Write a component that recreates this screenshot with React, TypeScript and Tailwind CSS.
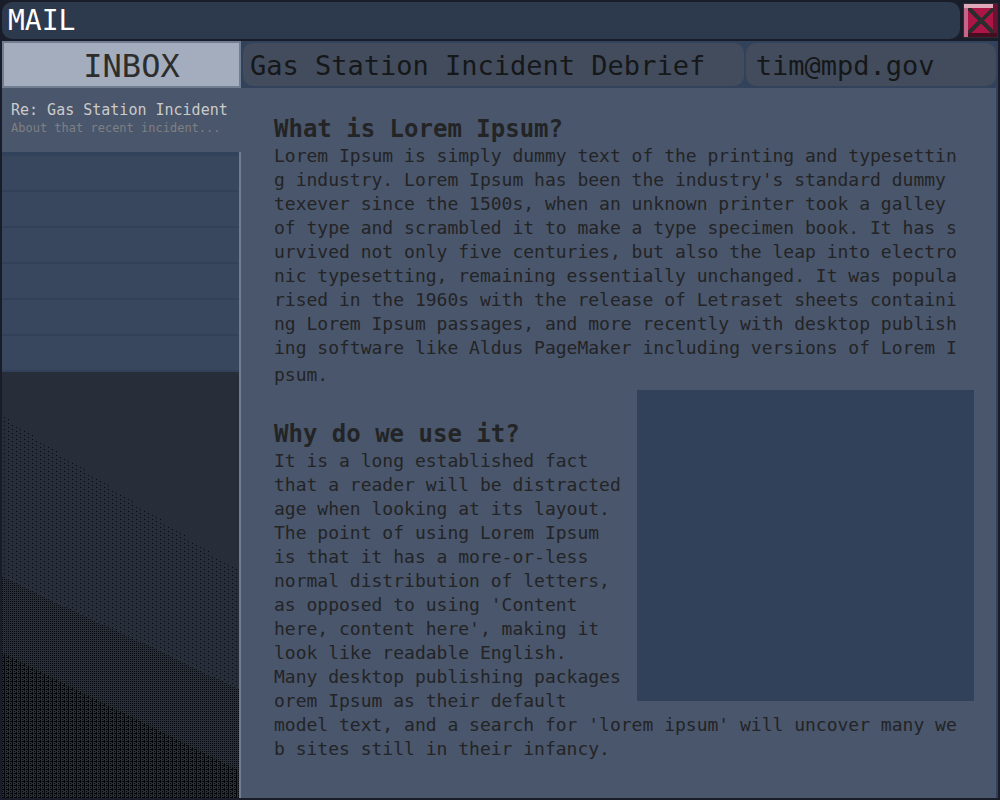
const intro = [
  "Lorem Ipsum is simply dummy text of the printing and typesettin",
  "g industry. Lorem Ipsum has been the industry's standard dummy",
  "texever since the 1500s, when an unknown printer took a galley",
  "of type and scrambled it to make a type specimen book. It has s",
  "urvived not only five centuries, but also the leap into electro",
  "nic typesetting, remaining essentially unchanged. It was popula",
  "rised in the 1960s with the release of Letraset sheets containi",
  "ng Lorem Ipsum passages, and more recently with desktop publish",
  "ing software like Aldus PageMaker including versions of Lorem I",
];

const usage = [
  "It is a long established fact",
  "that a reader will be distracted",
  "age when looking at its layout.",
  "The point of using Lorem Ipsum",
  "is that it has a more-or-less",
  "normal distribution of letters,",
  "as opposed to using 'Content",
  "here, content here', making it",
  "look like readable English.",
  "Many desktop publishing packages",
  "orem Ipsum as their default",
  "model text, and a search for 'lorem ipsum' will uncover many we",
  "b sites still in their infancy.",
];

function Lines({ lines }: { lines: string[] }) {
  return (
    <p className="whitespace-pre text-[18px] leading-6">
      {lines.map((line) => (
        <span key={line} className="block">
          {line}
        </span>
      ))}
    </p>
  );
}

function CloseIcon() {
  return (
    <svg viewBox="0 0 35 35" className="size-full" shapeRendering="crispEdges" aria-hidden="true">
      <rect width="35" height="35" fill="#2e2b32" />
      <rect x="1" y="1" width="33" height="33" fill="#ab1647" />
      <rect x="1" y="30" width="33" height="4" fill="#450d20" />
      <rect x="30" y="1" width="4" height="29" fill="#68132f" />
      <rect x="1" y="1" width="4" height="33" fill="#c5668a" />
      <rect x="1" y="1" width="29" height="4" fill="#e0a8bb" />
      <path d="M5 5h3l10 10L28 5h2v3L20.500 17.500 30 27v3h-3L17.500 20.500 8 30H5v-3l9.500-9.500L5 8z" fill="#2d2d2f" />
    </svg>
  );
}

function DitheredShade() {
  return (
    <svg className="absolute inset-0 size-full" shapeRendering="crispEdges" aria-hidden="true">
      <defs>
        <pattern id="sparse" width="8" height="4" patternUnits="userSpaceOnUse">
          <path d="M2 1h1v1h-1zM6 3h1v1h-1z" fill="#06090d" />
        </pattern>
        <pattern id="medium" width="4" height="4" patternUnits="userSpaceOnUse">
          <path d="M0 1h1v1h-1zM2 1h1v1h-1zM0 3h1v1h-1zM2 3h1v1h-1z" fill="#06090d" />
        </pattern>
        <pattern id="dense" width="8" height="4" patternUnits="userSpaceOnUse">
          <path d="M2 0h1v4h-1zM6 0h1v3h-1zM0 1h1v1h-1zM0 3h1v1h-1zM4 1h1v1h-1zM4 3h1v1h-1zM1 1h1v1h-1zM5 1h1v1h-1z" fill="#020406" />
        </pattern>
      </defs>
      <path d="M0 43 237 199V317L0 205z" fill="url(#sparse)" />
      <path d="M0 205 237 317V399L0 281z" fill="url(#medium)" />
      <path d="M0 281 237 399V3000H0z" fill="url(#dense)" />
    </svg>
  );
}

export default function App() {
  return (
    <div className="flex min-h-screen flex-col border-2 border-[#181d29] bg-[#181d29] font-['DejaVu_Sans_Mono',monospace] text-[#232425]">
      <header className="flex h-[39px] shrink-0 items-start gap-[3px] pb-[2px]">
        <h1 className="flex h-full flex-1 items-center rounded-[10px] bg-[#2d394c] pl-[6px] text-[28px] leading-none text-white">
          MAIL
        </h1>
        <button type="button" aria-label="Close" className="mt-px size-[35px] shrink-0">
          <CloseIcon />
        </button>
      </header>

      <div className="flex flex-1">
        <aside className="flex w-[239px] shrink-0 flex-col">
          <h2 className="flex h-[47px] shrink-0 items-center justify-center border-2 border-[#717d90] bg-[#a4adbd] pt-[2px] pl-5 text-[32px] leading-none text-[#2d2d2d]">
            INBOX
          </h2>
          <button type="button" className="flex h-16 shrink-0 flex-col bg-[#4a566c] px-[9px] pt-3 text-left whitespace-nowrap">
            <span className="text-[15px] leading-5 text-[#cbcbc9]">Re: Gas Station Incident</span>
            <span className="text-[12px] leading-4 text-[#7f8081]">About that recent incident...</span>
          </button>
          <div className="flex flex-1 flex-col border-r-2 border-[#717d90]">
            <div className="h-1 shrink-0 bg-[#33425b]" />
            {[0, 1, 2, 3, 4, 5].map((slot) => (
              <div key={slot} className="h-9 shrink-0 border-b-2 border-[#32405a] bg-[#38475e]" />
            ))}
            <div className="relative flex-1 bg-[#272e39]">
              <DitheredShade />
            </div>
          </div>
        </aside>

        <main className="flex min-w-0 flex-1 flex-col border-r-2 border-[#32405a] bg-[#4a566c]">
          <div className="grid h-[47px] shrink-0 grid-cols-[2fr_1fr] gap-[2px] bg-[#33425b] py-[2px] pl-[2px] text-[27px] leading-none whitespace-nowrap text-[#161718]">
            <h2 className="flex items-center rounded-[10px] bg-[#424c5d] pt-[2px] pl-[7px]">Gas Station Incident Debrief</h2>
            <p className="flex items-center rounded-[10px] bg-[#424c5d] pt-[2px] pl-[10px]">tim@mpd.gov</p>
          </div>

          <article className="pt-[26px] pr-[22px] pb-9 pl-[33px]">
            <section>
              <h3 className="text-[24px] leading-[30px] font-bold">What is Lorem Ipsum?</h3>
              <Lines lines={intro} />
              <p className="text-[18px] leading-[30px]">psum.</p>
            </section>
            <section>
              <div className="float-right h-[311px] w-[337px] bg-[#31415a]" />
              <h3 className="pt-[29px] text-[24px] leading-[30px] font-bold">Why do we use it?</h3>
              <Lines lines={usage} />
            </section>
          </article>
        </main>
      </div>
    </div>
  );
}
